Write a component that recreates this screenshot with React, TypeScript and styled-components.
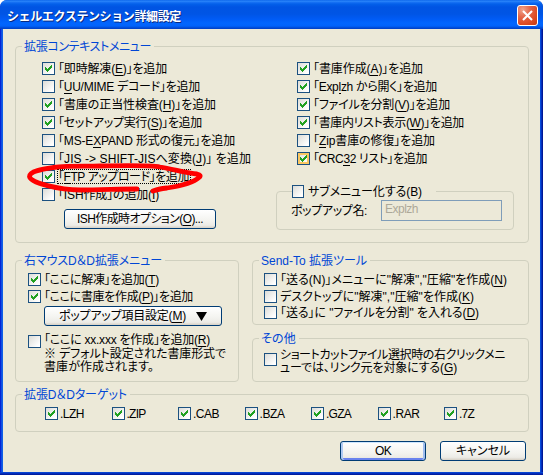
import React, { useLayoutEffect, useRef, useState } from "react";
import styled, { createGlobalStyle, css } from "styled-components";

const Global = createGlobalStyle`
  * { box-sizing: border-box; }
  body {
    margin: 0;
    font: 12px/12px "Liberation Sans", "Noto Sans CJK JP", sans-serif;
    font-feature-settings: "palt";
    color: #000;
    overflow: hidden;
  }
`;

const Dialog = styled.div`
  position: relative;
  width: 543px;
  height: 475px;
  display: flex;
  flex-direction: column;
  background: linear-gradient(90deg, #0019cf 0, #0831d9 1px, #166aee 2px, #0855dd 3px, #0855dd 540px, #0441d8 541px, #001ea0 542px, #00138c 543px);
  border-radius: 7px 7px 0 0;
  overflow: hidden;
`;

const TitleBar = styled.header`
  flex: none;
  height: 29px;
  padding: 2px 5px 0 7px;
  display: flex;
  align-items: center;
  justify-content: space-between;
  background: linear-gradient(#0058e6 0, #2f8bfb 1px, #1a74f5 2px, #0360ea 4px, #0054e3 7px, #0055e5 14px, #005bf5 19px, #0266fe 23px, #0163fb 26px, #0148d2 28px, #0040c4 29px);
`;

const Title = styled.h1`
  margin: 2px 0 0;
  font: 700 12px/14px "Liberation Sans", "Noto Sans CJK JP", sans-serif;
  color: #fff;
  text-shadow: 1px 1px #0a2a80;
`;

const CloseButton = styled.button`
  width: 21px;
  height: 21px;
  padding: 0;
  border: 1px solid #fff;
  border-radius: 3px;
  background: radial-gradient(circle at 25% 20%, #f0a48c 0, #e4674a 35%, #dc4a22 70%, #c4390f 100%);
  display: grid;
  place-items: center;
`;

const Client = styled.main`
  flex: none;
  height: 443px;
  margin: 0 3px;
  padding: 11px 11px 0 12px;
  background: #ece9d8;
  display: flex;
  flex-direction: column;
`;

const BottomEdge = styled.div`
  height: 3px;
  background: linear-gradient(#0855dd 0, #0434c8 1px, #001590 3px);
`;

const Group = styled.fieldset<{ $h: number; $top?: number }>`
  flex: none;
  min-width: 0;
  height: ${(p) => p.$h}px;
  margin: ${(p) => p.$top ?? 0}px 0 0;
  padding: 0;
  border: 1px solid #d0d0bf;
  border-radius: 4px;
`;

const SubGroup = styled(Group)`
  width: 238px;
  margin-left: -21px;
`;

const Legend = styled.legend`
  height: 12px;
  margin-left: 6px;
  padding: 0 3px 0 2px;
  color: #0046d5;
`;

const CheckLegend = styled.legend`
  height: 13px;
  margin-left: 15px;
  padding: 0 14px 0 0;
`;

const Columns = styled.div<{ $template: string; $gap: number; $pad?: string }>`
  display: grid;
  grid-template-columns: ${(p) => p.$template};
  column-gap: ${(p) => p.$gap}px;
  padding: ${(p) => p.$pad ?? "0"};
`;

const Stack = styled.div<{ $gap: number; $pad?: string }>`
  display: flex;
  flex-direction: column;
  align-items: flex-start;
  gap: ${(p) => p.$gap}px;
  padding: ${(p) => p.$pad ?? "0"};
`;

const Pane = styled.div`
  display: flex;
  flex-direction: column;
`;

const CheckRow = styled.label<{ $gap?: number; $top?: number; $raised?: boolean }>`
  height: 13px;
  margin-top: ${(p) => p.$top ?? 0}px;
  display: flex;
  align-items: ${(p) => (p.$raised ? "flex-end" : "center")};
  gap: ${(p) => p.$gap ?? 3}px;
`;

const Box = styled.span<{ $hot?: boolean; $small?: boolean }>`
  flex: none;
  width: ${(p) => (p.$small ? 12 : 13)}px;
  height: 13px;
  border: 1px solid #1c5180;
  background: linear-gradient(135deg, #dcdcd7, #fff 85%);
  display: grid;
  place-items: center;
  ${(p) => p.$hot && css`box-shadow: inset 0 0 0 2px #fac761;`}
`;

const Run = styled.span<{ $w: number; $raised?: boolean }>`
  display: block;
  flex: none;
  width: ${(p) => p.$w}px;
  height: ${(p) => (p.$raised ? 14 : 13)}px;
  padding-top: ${(p) => (p.$raised ? 0 : 1)}px;
  line-height: 13px;
  white-space: pre;
`;

const Mnemonic = styled.span`
  box-shadow: inset 0 -1px currentColor;
  display: inline-block;
  height: 13px;
  line-height: 13px;
  vertical-align: top;
`;

const Focus = styled.span`
  margin: 0 -2px 0 -1px;
  padding: 0 1px 0 0;
  border: 1px dotted #000;
`;

const Button = styled.button<{ $w: number; $primary?: boolean }>`
  flex: none;
  width: ${(p) => p.$w}px;
  height: 20px;
  padding: 0;
  border: 1px solid #003c74;
  border-radius: 3px;
  background: linear-gradient(#fff, #f3f3ef 60%, #ecebe6 85%, #d6d0c5);
  font: inherit;
  font-feature-settings: inherit;
  color: #000;
  display: flex;
  align-items: center;
  justify-content: center;
  gap: 10px;
  ${(p) => p.$primary && css`box-shadow: inset 0 1px #cee7ff, inset 2px 0 #b0caf2, inset -2px 0 #a0bdee, inset 0 -2px #6982ee;`}
`;

const RaisedFace = styled.span`
  margin-top: -2px;
`;

const IshButton = styled(Button)`
  margin: 3px 0 0 22px;
`;

const PopupButton = styled(Button)`
  margin: 3px 0 0 16px;
`;

const Field = styled.div`
  display: flex;
  align-items: center;
  justify-content: space-between;
  padding: 2px 11px 0 14px;
`;

const TextBox = styled.div`
  width: 121px;
  height: 21px;
  padding: 1px 0 0 3px;
  border: 1px solid #7f9db9;
  color: #aca899;
`;

const Note = styled.div`
  padding: 0 0 0 16px;
  margin-top: -1px;
`;

const LongCheck = styled.label`
  display: flex;
  gap: 3px;
  padding: 4px 0 0 11px;
`;

const BoxSlot = styled.span`
  padding-top: 5px;
`;

const LongText = styled.span`
  display: flex;
  flex-direction: column;
`;

const FormatGrid = styled.div`
  display: grid;
  grid-template-columns: repeat(7, 66.5px);
  padding: 7px 0 0 29px;
`;

const Actions = styled.footer`
  display: flex;
  justify-content: flex-end;
  gap: 14px;
  margin: 9px 3px 0 0;
`;

const Scribble = styled.svg`
  position: absolute;
  left: 0;
  top: 155px;
  pointer-events: none;
`;

/* Spreads a line over the given width; "_" marks the character to underline. */
function Text({ w, raised, children }: { w: number; raised?: boolean; children: string }) {
  const ref = useRef<HTMLSpanElement>(null);
  const [spacing, setSpacing] = useState(0);
  const count = children.replace("_", "").length;
  useLayoutEffect(() => {
    if (ref.current) {
      ref.current.style.letterSpacing = "0px";
      setSpacing((w - ref.current.getBoundingClientRect().width) / count);
    }
  }, [w, count]);
  const at = children.indexOf("_");
  return (
    <Run $w={w} $raised={raised}>
      <span ref={ref} style={{ letterSpacing: spacing }}>
        {at < 0 ? children : (
          <>
            {children.slice(0, at)}
            <Mnemonic>{children[at + 1]}</Mnemonic>
            {children.slice(at + 2)}
          </>
        )}
      </span>
    </Run>
  );
}

type CheckProps = { w: number; label: string; on?: boolean; hot?: boolean; focus?: boolean; top?: number; gap?: number; small?: boolean; raised?: boolean };

function Check({ w, label, on, hot, focus, top, gap, small, raised }: CheckProps) {
  const text = <Text w={w} raised={raised}>{label}</Text>;
  return (
    <CheckRow $top={top} $gap={gap} $raised={raised}>
      <Box $hot={hot} $small={small}>
        {on && (
          <svg width="7" height="7" viewBox="0 0 7 7" shapeRendering="crispEdges">
            <path fill="#21a121" d="M0 2h1v1h1v1h1v-1h1v-1h1v-1h1v-1h1v3h-1v1h-1v1h-1v1h-1v1h-1v-1h-1v-1h-1z" />
          </svg>
        )}
      </Box>
      {focus ? <Focus>{text}</Focus> : text}
    </CheckRow>
  );
}

const leftItems: CheckProps[] = [
  { label: "「即時解凍(_E)」を追加", w: 109, on: true },
  { label: "「_UU/MIME デコード」を追加", w: 142 },
  { label: "「書庫の正当性検査(_H)」を追加", w: 158, on: true },
  { label: "「セットアップ実行(_S)」を追加", w: 144, on: true },
  { label: "「MS-E_XPAND 形式の復元」を追加", w: 177 },
  { label: "「JIS -> SHIFT-JISへ変換(_J)」 を追加", w: 193 },
  { label: "「_FTP アップロード」を追加", w: 131, on: true, focus: true },
  { label: "「ISH作成」の追加(_I)", w: 101 },
];

const rightItems: CheckProps[] = [
  { label: "「書庫作成(_A)」を追加", w: 110, on: true },
  { label: "「Exp_lzh から開く」を追加", w: 124, on: true },
  { label: "「ファイルを分割(_V)」を追加", w: 137, on: true },
  { label: "「書庫内リスト表示(_W)」を追加", w: 151, on: true },
  { label: "「_Zip書庫の修復」を追加", w: 122 },
  { label: "「CRC_32 リスト」を追加", w: 114, on: true, hot: true },
];

const formats: [string, number][] = [
  [".LZH", 24], [".ZIP", 19], [".CAB", 26], [".BZA", 25], [".GZA", 25], [".RAR", 27], [".7Z", 15],
];

export default function App() {
  return (
    <>
      <Global />
      <Dialog>
        <TitleBar>
          <Title><Text w={174}>シェルエクステンション詳細設定</Text></Title>
          <CloseButton aria-label="閉じる">
            <svg width="13" height="13" viewBox="0 0 13 13">
              <path d="M2 2l9 9M11 2l-9 9" stroke="#fff" strokeWidth="2.1" />
            </svg>
          </CloseButton>
        </TitleBar>
        <Client>
          <Group $h={203}>
            <Legend><Text w={127}>拡張コンテキストメニュー</Text></Legend>
            <Columns $template="234px 1fr" $gap={21} $pad="10px 0 0 26px">
              <Stack $gap={5}>
                {leftItems.map((item) => <Check key={item.label} {...item} />)}
                <IshButton $w={152}><RaisedFace><Text w={126}>ISH作成時オプション(_O)...</Text></RaisedFace></IshButton>
              </Stack>
              <Stack $gap={5}>
                {rightItems.map((item) => <Check key={item.label} {...item} />)}
                <SubGroup $h={45} $top={15}>
                  <CheckLegend><Check small gap={4} w={114} label="サブメニュー化する(B)" /></CheckLegend>
                  <Field>
                    <Text w={76}>ポップアップ名:</Text>
                    <TextBox><Text w={33}>Explzh</Text></TextBox>
                  </Field>
                </SubGroup>
              </Stack>
            </Columns>
          </Group>

          <Columns $template="224px 277px" $gap={13} $pad="11px 0 0">
            <Group $h={128}>
              <Legend><Text w={138}>右マウスD＆D拡張メニュー</Text></Legend>
              <Stack $gap={0} $pad="7px 0 0 12px">
                <Check on w={115} label="「ここに解凍」を追加(_T)" />
                <Check on top={4} w={149} label="「ここに書庫を作成(_P)」を追加" />
                <PopupButton $w={178}>
                  <RaisedFace><Text w={127}>ポップアップ項目設定(_M)</Text></RaisedFace>
                  <svg width="11" height="9" viewBox="0 0 11 9"><path d="M0 0h11L5.5 9z" /></svg>
                </PopupButton>
                <Check raised top={9} w={166} label="「ここに xx.xxx を作成」を追加(_R)" />
                <Note>
                  <Text w={182}>※ デフォルト設定された書庫形式で</Text>
                  <Text w={110}>書庫が作成されます。</Text>
                </Note>
              </Stack>
            </Group>
            <Pane>
              <Group $h={71}>
                <Legend><Text w={106}>Send-To 拡張ツール</Text></Legend>
                <Stack $gap={0} $pad="7px 0 0 11px">
                  <Check w={227} label={'「送る(N)」メニューに"解凍","圧縮"を作成(_N)'} />
                  <Check top={4} w={194} label={'デスクトップに"解凍","圧縮"を作成(_K)'} />
                  <Check top={3} w={199} label={'「送る」に "ファイルを分割" を入れる(_D)'} />
                </Stack>
              </Group>
              <Group $h={50} $top={7}>
                <Legend><Text w={35}>その他</Text></Legend>
                <LongCheck>
                  <BoxSlot><Box as="div" /></BoxSlot>
                  <LongText>
                    <Text w={225}>ショートカットファイル選択時の右クリックメニ</Text>
                    <Text w={177}>ューでは、リンク元を対象にする(_G)</Text>
                  </LongText>
                </LongCheck>
              </Group>
            </Pane>
          </Columns>

          <Group $h={44} $top={6}>
            <Legend><Text w={103}>拡張D＆Dターゲット</Text></Legend>
            <FormatGrid>
              {formats.map(([label, w]) => <Check key={label} on gap={2} label={label} w={w} />)}
            </FormatGrid>
          </Group>

          <Actions>
            <Button $w={86} $primary><RaisedFace><Text w={16}>OK</Text></RaisedFace></Button>
            <Button $w={86}><RaisedFace><Text w={54}>キャンセル</Text></RaisedFace></Button>
          </Actions>
        </Client>
        <BottomEdge />
        <Scribble width="210" height="42" viewBox="0 155 210 42">
          <path
            d="M137 189C120 189 100 190 80 190C60 190 30 183 29.500 176.500C29.500 171 43 169 53 167.500C70 165.500 85 166.500 100 166C125 165.500 150 165 160 167C172 169 188 173 197 174Q202 175 199 177.500C194 182 180 186 167 188Q158 189 153 191"
            fill="none" stroke="#f00" strokeWidth="4.800" strokeLinecap="round" strokeLinejoin="round"
          />
        </Scribble>
      </Dialog>
    </>
  );
}
